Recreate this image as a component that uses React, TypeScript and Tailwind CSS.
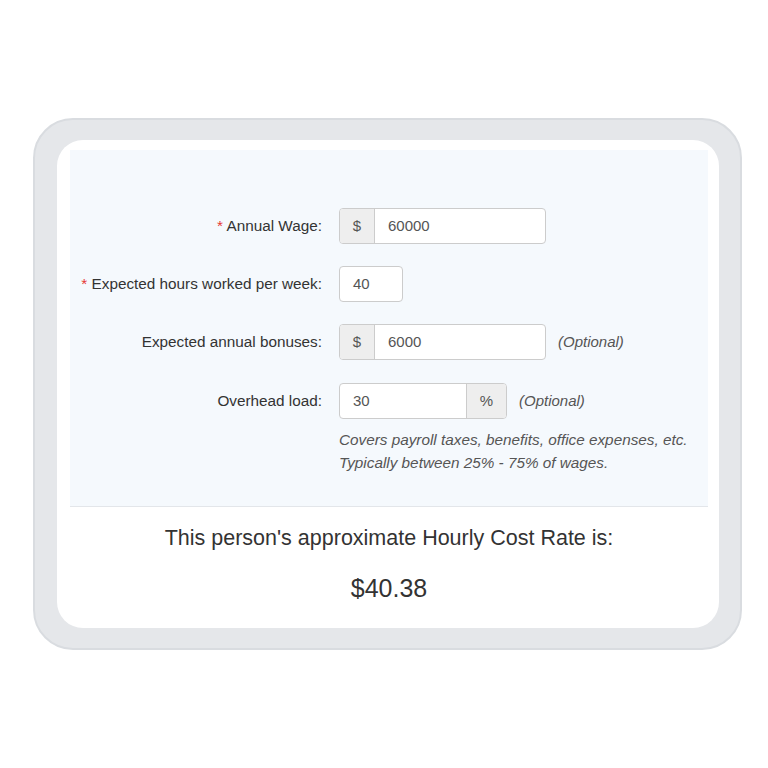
export default function App() {
  const font = { fontFamily: '"Liberation Sans", Arial, sans-serif' };

  const inputBox =
    "flex h-9 items-stretch overflow-hidden rounded border border-[#cccccc] bg-white text-[15px] text-[#555555]";

  return (
    <div className="flex h-[768px] w-[768px] bg-white" style={font}>
      {/* Frame */}
      <div className="ml-[33px] mt-[118px] h-[532px] w-[709px] rounded-[40px] border-2 border-[#d9dce0] bg-[#e5e7ea] pb-[20px] pl-[22px] pr-[21px] pt-[20px]">
        <div className="flex h-full flex-col rounded-[26px] bg-white pl-[13px] pr-[11px] pt-[10px]">
          {/* Form panel */}
          <div className="flex h-[357px] flex-col border-b border-[#e3e6ea] bg-[#f5f9fd] pt-[58px]">
            {/* Annual wage */}
            <div className="flex h-9 items-center">
              <div className="w-[252px] text-right text-[15.3px] text-[#333333]">
                <span className="text-[#e53935]">*</span> Annual Wage:
              </div>
              <div className={`${inputBox} ml-[17px] w-[207px]`}>
                <span className="flex w-[35px] items-center justify-center border-r border-[#cccccc] bg-[#eeeeee]">
                  $
                </span>
                <span className="flex items-center pl-[13px]">60000</span>
              </div>
            </div>

            {/* Hours */}
            <div className="mt-[22px] flex h-9 items-center">
              <div className="w-[252px] text-right text-[15.3px] text-[#333333]">
                <span className="text-[#e53935]">*</span> Expected hours worked per week:
              </div>
              <div className={`${inputBox} ml-[17px] w-[64px]`}>
                <span className="flex items-center pl-[13px]">40</span>
              </div>
            </div>

            {/* Bonuses */}
            <div className="mt-[22px] flex h-9 items-center">
              <div className="w-[252px] text-right text-[15.3px] text-[#333333]">
                Expected annual bonuses:
              </div>
              <div className={`${inputBox} ml-[17px] w-[207px]`}>
                <span className="flex w-[35px] items-center justify-center border-r border-[#cccccc] bg-[#eeeeee]">
                  $
                </span>
                <span className="flex items-center pl-[13px]">6000</span>
              </div>
              <span className="ml-[12px] text-[15px] italic text-[#555555]">(Optional)</span>
            </div>

            {/* Overhead */}
            <div className="mt-[23px] flex h-9 items-center">
              <div className="w-[252px] text-right text-[15.3px] text-[#333333]">
                Overhead load:
              </div>
              <div className={`${inputBox} ml-[17px] w-[168px]`}>
                <span className="flex flex-1 items-center pl-[13px]">30</span>
                <span className="flex w-[40px] items-center justify-center border-l border-[#cccccc] bg-[#eeeeee]">
                  %
                </span>
              </div>
              <span className="ml-[12px] text-[15px] italic text-[#555555]">(Optional)</span>
            </div>

            <div className="ml-[269px] mt-[9px] text-[15.3px] italic leading-[23px] text-[#555555]">
              <div>Covers payroll taxes, benefits, office expenses, etc.</div>
              <div>Typically between 25% - 75% of wages.</div>
            </div>
          </div>

          {/* Result */}
          <div className="flex flex-col items-center text-[#333333]">
            <div className="mt-[18px] text-[21.5px] leading-[26px]">
              This person's approximate Hourly Cost Rate is:
            </div>
            <div className="mt-[22px] text-[25px] leading-[30px]">$40.38</div>
          </div>
        </div>
      </div>
    </div>
  );
}
